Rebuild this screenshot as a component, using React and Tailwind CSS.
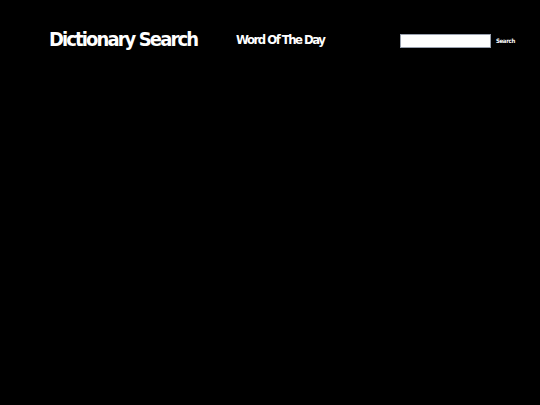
const App = () => {
    return (
        <div className="min-h-[405px] w-full bg-black text-white font-stretch-condensed" style={{ fontFamily: "Impact, 'DejaVu Sans', sans-serif" }}>
            <header className="flex items-center pt-[26px] pl-[49px] pr-[25px]">
                <h1 className="text-[20px] font-bold leading-[26px] tracking-[-1.9px] w-[187px] whitespace-nowrap">Dictionary Search</h1>
                <a className="text-[13px] font-bold leading-[18px] tracking-[-1.5px] whitespace-nowrap mt-[2px]">Word Of The Day</a>
                <form className="ml-auto flex items-center gap-[5px] mt-[4px]">
                    <input
                        type="text"
                        className="w-[91px] h-[14px] bg-white border border-gray-400 text-black text-[8px]"
                    />
                    <button type="button" className="text-[6px] font-bold leading-[8px] px-0 tracking-[-0.3px] whitespace-nowrap">
                        Search
                    </button>
                </form>
            </header>
        </div>
    );
};

export default App;
